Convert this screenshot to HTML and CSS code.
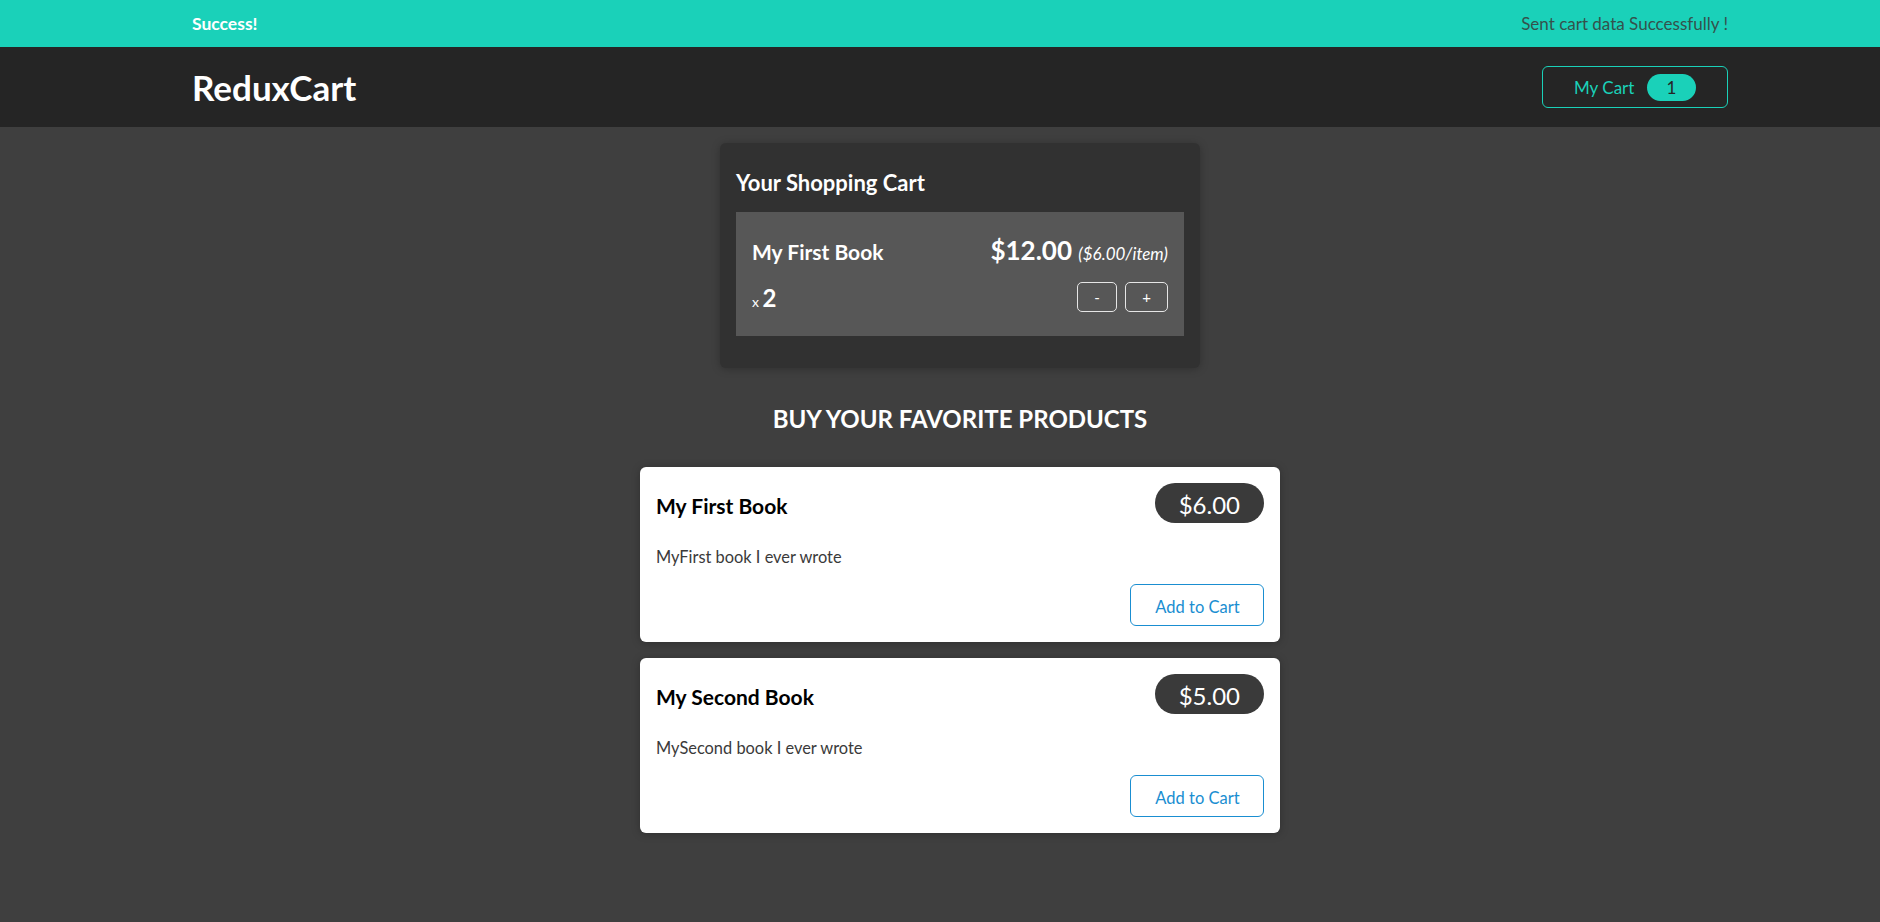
FILE: index.html
```html
<!DOCTYPE html>
<html lang="en">
<head>
<meta charset="utf-8">
<title>ReduxCart</title>
<link rel="stylesheet" href="styles.css">
</head>
<body>
<div class="page">
  <section class="notification">
    <h2 class="notification-title">Success!</h2>
    <p class="notification-message">Sent cart data Successfully !</p>
  </section>
  <header class="header">
    <h1 class="logo">ReduxCart</h1>
    <nav>
      <ul class="nav-list">
        <li>
          <button class="cart-button">
            <span class="cart-label">My Cart</span>
            <span class="badge">1</span>
          </button>
        </li>
      </ul>
    </nav>
  </header>
  <main class="main">
    <section class="cart">
      <h2 class="cart-title">Your Shopping Cart</h2>
      <ul class="cart-list">
        <li class="cart-item">
          <header class="cart-item-header">
            <h3 class="cart-item-title">My First Book</h3>
            <div class="cart-item-price">$12.00 <span class="cart-item-unit">($6.00/item)</span></div>
          </header>
          <div class="cart-item-details">
            <div class="quantity">x <span class="quantity-value">2</span></div>
            <div class="qty-actions">
              <button class="qty-button qty-minus">-</button>
              <button class="qty-button qty-plus">+</button>
            </div>
          </div>
        </li>
      </ul>
    </section>
    <section class="products">
      <h2 class="products-title">Buy your favorite products</h2>
      <ul class="product-list">
        <li class="product">
          <header class="product-header">
            <h3 class="product-title">My First Book</h3>
            <div class="product-price">$6.00</div>
          </header>
          <p class="product-desc">MyFirst book I ever wrote</p>
          <div class="product-actions">
            <button class="add-button">Add to Cart</button>
          </div>
        </li>
        <li class="product">
          <header class="product-header">
            <h3 class="product-title">My Second Book</h3>
            <div class="product-price">$5.00</div>
          </header>
          <p class="product-desc">MySecond book I ever wrote</p>
          <div class="product-actions">
            <button class="add-button">Add to Cart</button>
          </div>
        </li>
      </ul>
    </section>
  </main>
</div>
</body>
</html>
```
FILE: styles.css
```css
* {
  box-sizing: border-box;
}

html {
  font-family: Lato, "Liberation Sans", sans-serif;
}

body {
  margin: 0;
  background-color: #3f3f3f;
  overflow: hidden;
}

.page {
  width: 1920px;
}

/* Notification */
.notification {
  height: 47px;
  padding: 0 192px;
  display: flex;
  justify-content: space-between;
  align-items: center;
  background-color: #1ad1b9;
}

.notification-title {
  margin: 0;
  font-size: 17.5px;
  font-weight: 700;
  color: #ffffff;
}

.notification-message {
  margin: 0;
  font-size: 17px;
  color: #34514c;
}

/* Header */
.header {
  height: 80px;
  padding: 0 192px;
  display: flex;
  justify-content: space-between;
  align-items: center;
  background-color: #252525;
}

.logo {
  margin: 0;
  font-size: 35px;
  font-weight: 700;
  color: #ffffff;
}

.nav-list {
  list-style: none;
  margin: 0;
  padding: 0;
}

.cart-button {
  height: 42px;
  width: 186px;
  padding: 0 31px;
  display: flex;
  justify-content: space-between;
  align-items: center;
  background: transparent;
  border: 1px solid #1ad1b9;
  border-radius: 6px;
  color: #1ad1b9;
  font-family: inherit;
  font-size: 17px;
}

.badge {
  width: 49px;
  height: 27px;
  line-height: 27px;
  text-align: center;
  border-radius: 30px;
  background-color: #1ad1b9;
  color: #252525;
  font-size: 17px;
}

/* Main */
.main {
  padding-top: 16px;
}

.cart {
  width: 480px;
  margin: 0 auto;
  padding: 16px;
  background-color: #313131;
  border-radius: 6px;
  box-shadow: 0 1px 8px rgba(0, 0, 0, 0.25);
  color: #ffffff;
}

.cart-title {
  margin: 8px 0 0;
  font-size: 22px;
  line-height: 31px;
  font-weight: 700;
}

.cart-list {
  list-style: none;
  margin: 0;
  padding: 0;
}

.cart-item {
  margin: 14px 0 16px;
  padding: 16px;
  background-color: #575757;
}

.cart-item-header {
  height: 41px;
  margin-bottom: 5px;
  display: flex;
  justify-content: space-between;
  align-items: baseline;
  line-height: 44px;
}

.cart-item-title {
  margin: 0;
  font-size: 21px;
  font-weight: 700;
}

.cart-item-price {
  font-size: 26px;
  font-weight: 700;
}

.cart-item-unit {
  font-size: 17px;
  font-weight: 400;
  font-style: italic;
}

.cart-item-details {
  display: flex;
  justify-content: space-between;
  align-items: center;
}

.quantity {
  font-size: 14px;
}

.quantity-value {
  font-size: 24px;
  font-weight: 700;
}

.qty-actions {
  display: flex;
  gap: 8px;
  margin: 8px 0;
}

.qty-button {
  height: 30px;
  padding: 0;
  background: transparent;
  border: 1px solid #e6e6e6;
  border-radius: 5px;
  color: #ffffff;
  font-family: inherit;
  font-size: 15px;
}

.qty-minus {
  width: 40px;
}

.qty-plus {
  width: 43px;
}

/* Products */
.products-title {
  margin: 32px 0;
  text-align: center;
  text-transform: uppercase;
  font-size: 24px;
  line-height: 37px;
  font-weight: 700;
  color: #ffffff;
}

.product-list {
  list-style: none;
  width: 640px;
  margin: -2px auto 0;
  padding: 0;
}

.product {
  margin: 16px 0;
  padding: 16px;
  background-color: #ffffff;
  border-radius: 6px;
  box-shadow: 0 1px 8px rgba(0, 0, 0, 0.25);
}

.product-header {
  display: flex;
  justify-content: space-between;
  align-items: baseline;
}

.product-title {
  margin: 0;
  font-size: 21px;
  font-weight: 700;
  color: #000000;
}

.product-price {
  height: 40px;
  padding: 0 24px;
  line-height: 43px;
  border-radius: 30px;
  background-color: #3a3a3a;
  color: #ffffff;
  font-size: 24px;
}

.product-desc {
  margin: 19px 0 13px;
  line-height: 29px;
  font-size: 16.4px;
  color: #3a3a3a;
}

.product-actions {
  display: flex;
  justify-content: flex-end;
}

.add-button {
  height: 42px;
  width: 134px;
  padding: 0 0 0 1px;
  background: transparent;
  border: 1px solid #1a8ed1;
  border-radius: 6px;
  color: #1a8ed1;
  font-family: inherit;
  font-size: 16.5px;
  line-height: 44px;
}
```
